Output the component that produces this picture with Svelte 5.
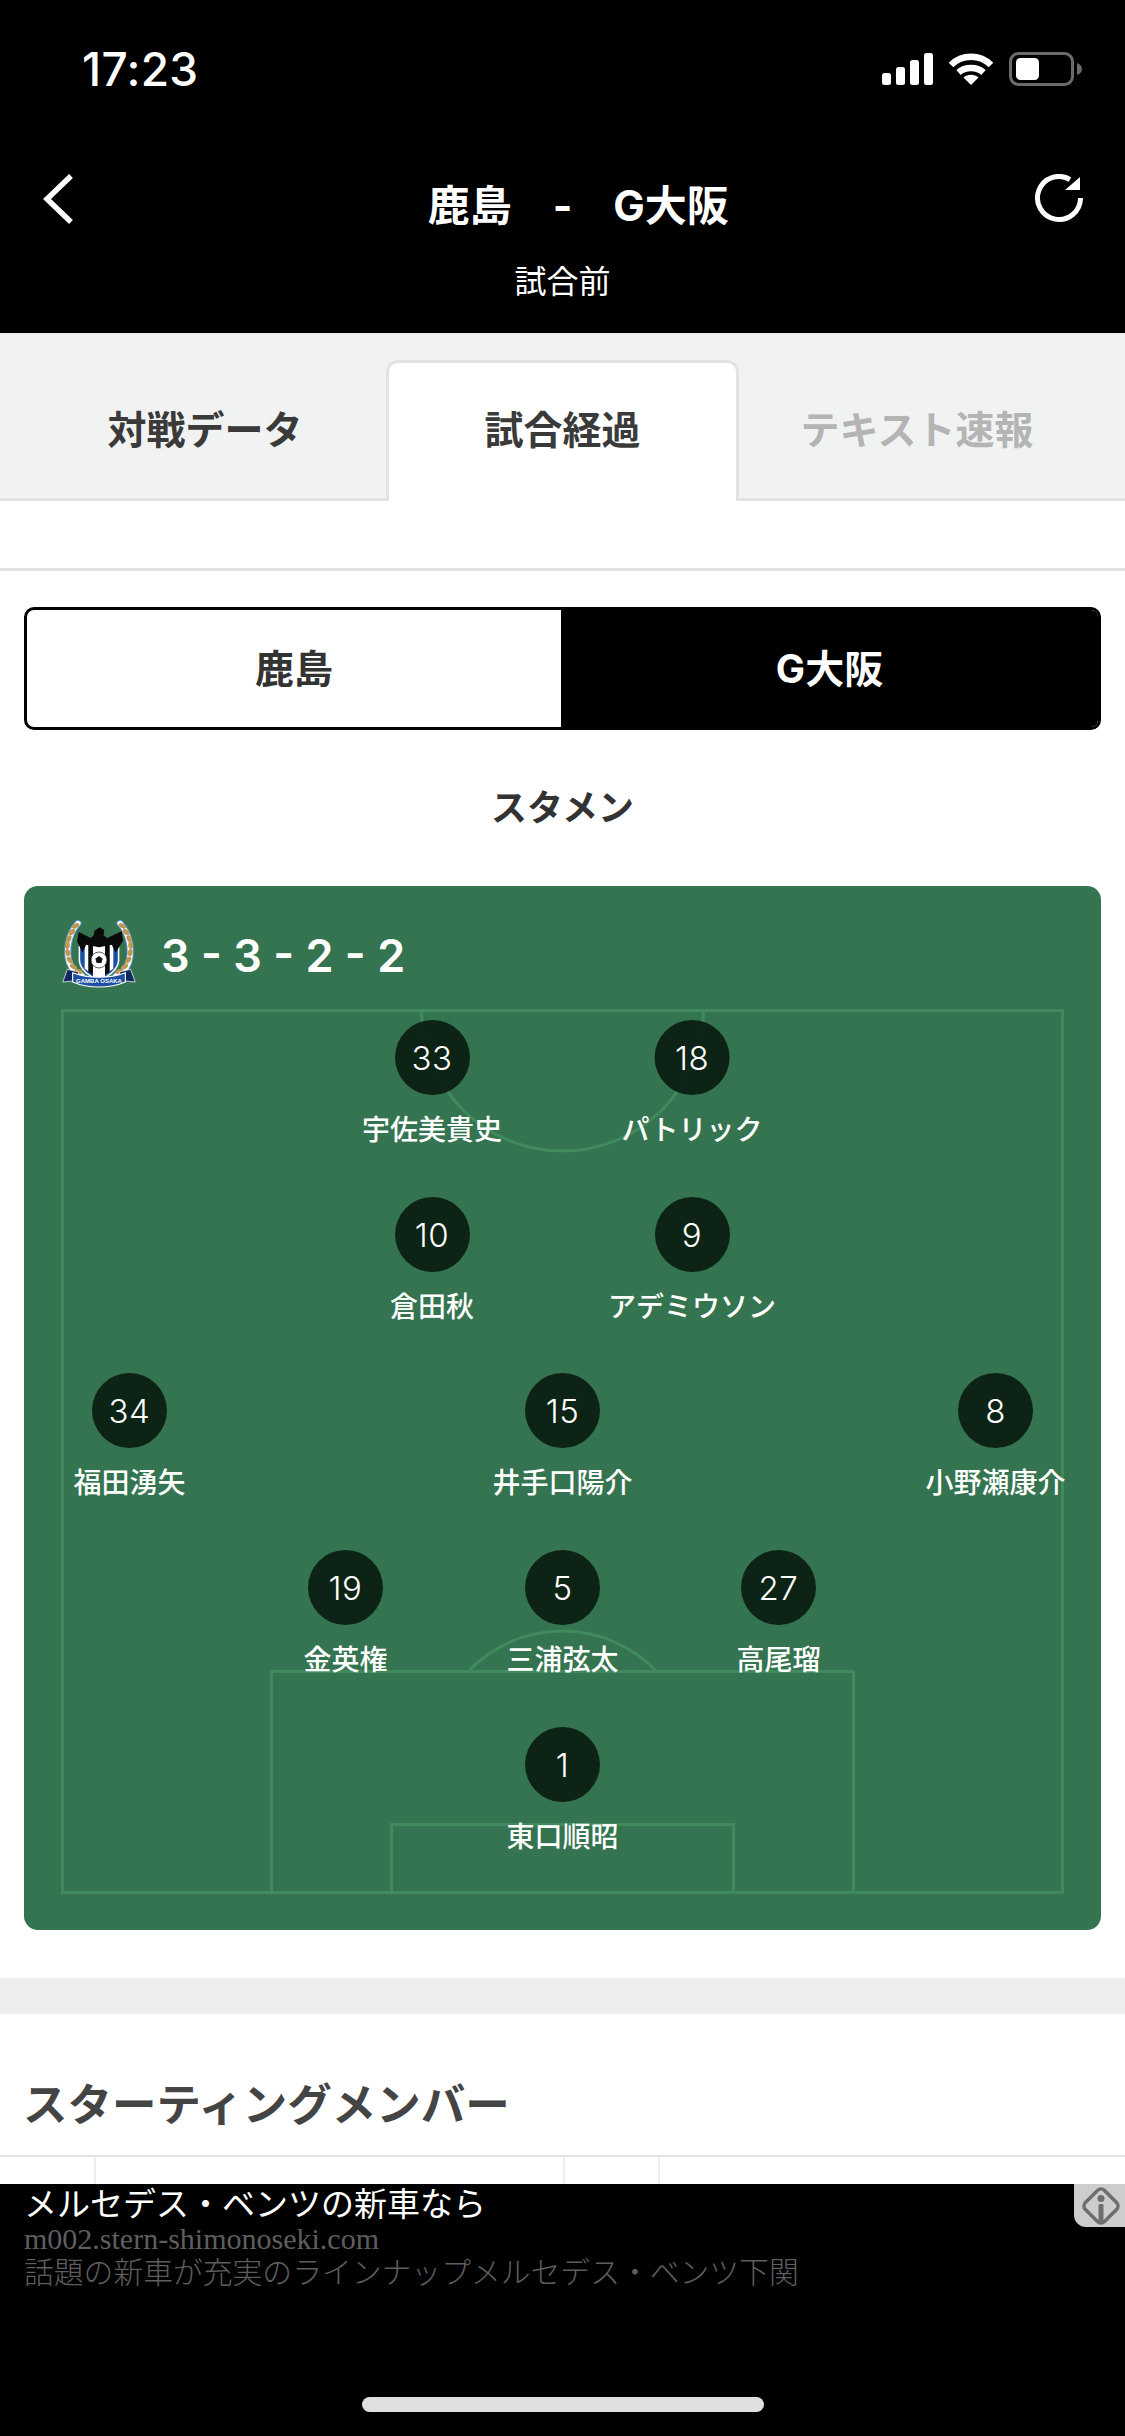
<script>
  const players = [
    { n: 33, name: '宇佐美貴史', x: 432, y: 1057.5 },
    { n: 18, name: 'パトリック', x: 692, y: 1057.5 },
    { n: 10, name: '倉田秋', x: 432, y: 1234.5 },
    { n: 9, name: 'アデミウソン', x: 692, y: 1234.5 },
    { n: 34, name: '福田湧矢', x: 129.5, y: 1410.5 },
    { n: 15, name: '井手口陽介', x: 562.5, y: 1410.5 },
    { n: 8, name: '小野瀬康介', x: 995.5, y: 1410.5 },
    { n: 19, name: '金英権', x: 345.5, y: 1587.5 },
    { n: 5, name: '三浦弦太', x: 562.5, y: 1587.5 },
    { n: 27, name: '高尾瑠', x: 778.5, y: 1587.5 },
    { n: 1, name: '東口順昭', x: 562.5, y: 1764.5 }
  ];
  const leaves = [
    [66, 48, -35], [56, 66, -50], [48, 86, -70], [44, 106, -85], [45, 128, 80], [50, 150, 60], [60, 170, 40], [74, 184, 25]
  ];
</script>

<div class="screen">
  <header class="top">
    <div class="status">
      <span class="time">17:23</span>
      <div class="status-icons">
        <svg class="signal" width="51" height="32" viewBox="0 0 51 32" fill="#fff">
          <rect x="0" y="20" width="9" height="12" rx="2.5" />
          <rect x="14" y="14" width="9" height="18" rx="2.5" />
          <rect x="28" y="7" width="9" height="25" rx="2.5" />
          <rect x="42" y="0" width="9" height="32" rx="2.5" />
        </svg>
        <svg class="wifi" width="46" height="34" viewBox="0 0 46 34" fill="none" stroke="#fff" stroke-width="6.5">
          <path d="M3 13C14 2 32 2 43 13" />
          <path d="M10.5 20.5C17 14.5 29 14.5 35.5 20.5" />
          <path d="M23 33l-7.5-7.5c4-3.6 11-3.6 15 0z" fill="#fff" stroke="none" />
        </svg>
        <svg class="battery" width="73" height="34" viewBox="0 0 73 34">
          <rect x="1.5" y="1.5" width="62" height="31" rx="8" fill="none" stroke="#6b6b6b" stroke-width="3" />
          <rect x="7" y="6" width="23" height="22" rx="4.5" fill="#fff" />
          <path d="M68 11c3 1 5 3 5 6s-2 5-5 6z" fill="#6b6b6b" />
        </svg>
      </div>
    </div>
    <div class="title-row">
      <div class="cell left">
        <svg class="back" width="32" height="52" viewBox="0 0 32 52" fill="none" stroke="#fff" stroke-width="5.5">
          <path d="M29 3L5 26l24 23" />
        </svg>
        <span class="team">鹿島</span>
      </div>
      <span class="dash">-</span>
      <div class="cell right">
        <span class="team">G大阪</span>
        <svg class="refresh" width="50" height="50" viewBox="0 0 50 50" fill="none">
          <path d="M47.5 24A21.5 21.5 0 1 1 37 5.5" stroke="#fff" stroke-width="5" />
          <path d="M32 16L47 16L47 3Z" fill="#fff" />
        </svg>
      </div>
    </div>
    <div class="subtitle">試合前</div>
  </header>

  <nav class="tabs">
    <div class="tab first">対戦データ</div>
    <div class="tab active">試合経過</div>
    <div class="tab last">テキスト速報</div>
  </nav>

  <div class="spacer"></div>

  <div class="toggle">
    <div class="side home-team">鹿島</div>
    <div class="side on">G大阪</div>
  </div>

  <h2 class="lineup">スタメン</h2>

  <section class="card">
    <div class="formation">
      <svg class="crest" width="90" height="85" viewBox="0 0 270 255">
        <g transform="translate(132 0) scale(1.13 1) translate(-128 0)">
          <g>
            <path d="M72 40C48 70 38 120 50 160C56 178 66 190 82 196" fill="none" stroke="#5f95d3" stroke-width="19" stroke-linecap="round" />
            <path d="M72 40C48 70 38 120 50 160C56 178 66 190 82 196" fill="none" stroke="#fff" stroke-width="14" stroke-linecap="round" />
            {#each leaves as l}
              <ellipse cx={l[0]} cy={l[1]} rx="11" ry="6.5" transform="rotate({l[2]} {l[0]} {l[1]})" fill="#bd9a54" />
            {/each}
          </g>
          <g transform="translate(256 0) scale(-1 1)">
            <path d="M72 40C48 70 38 120 50 160C56 178 66 190 82 196" fill="none" stroke="#5f95d3" stroke-width="19" stroke-linecap="round" />
            <path d="M72 40C48 70 38 120 50 160C56 178 66 190 82 196" fill="none" stroke="#fff" stroke-width="14" stroke-linecap="round" />
            {#each leaves as l}
              <ellipse cx={l[0]} cy={l[1]} rx="11" ry="6.5" transform="rotate({l[2]} {l[0]} {l[1]})" fill="#bd9a54" />
            {/each}
          </g>
          <path d="M74 108H182V150C182 182 150 202 128 214C106 202 74 182 74 150Z" fill="#fff" />
          <path d="M78 108H178V150C178 178 150 198 128 210C106 198 78 178 78 150Z" fill="#1d4fa3" />
          <path d="M90 105H100V184L90 176ZM156 105H166V176L156 184Z" fill="#fff" />
          <path d="M100 105H112V194L100 186ZM144 105H156V186L144 194Z" fill="#0a0a0a" />
          <path d="M112 105H144V204L128 210L112 200Z" fill="#fff" />
          <path d="M74 66L106 84L114 76L116 62L130 52L142 60L140 76L150 84L188 64L192 92L172 128L162 104L128 112L94 104L84 128L70 94Z" fill="#0a0a0a" />
          <path d="M44 178L74 186L68 212L32 216Z" fill="#10275f" stroke="#fff" stroke-width="2" />
          <path d="M212 178L182 186L188 212L224 216Z" fill="#10275f" stroke="#fff" stroke-width="2" />
          <path d="M58 188C100 206 156 206 198 188V216C156 236 100 236 58 216Z" fill="#1d4fa3" stroke="#fff" stroke-width="3" />
        </g>
        <circle cx="132" cy="150" r="24" fill="#fff" stroke="#111" stroke-width="2" />
        <path d="M132 138l11 8-4 13h-14l-4-13z" fill="#111" />
        <text x="132" y="218" text-anchor="middle" fill="#fff" class="crest-text">GAMBA OSAKA</text>
      </svg>
      <span class="shape">3 - 3 - 2 - 2</span>
    </div>
    <div class="pitch">
      <svg class="lines" width="1003" height="885" viewBox="0 0 1003 885" fill="none" stroke="#418a5e" stroke-width="3">
        <rect x="1.5" y="1.5" width="1000" height="882" />
        <path d="M360.5 1A141 141 0 0 0 642.5 1" />
        <rect x="210.5" y="662.5" width="582" height="221" />
        <rect x="330.5" y="815.5" width="342" height="68" />
        <path d="M408.7 661A130 130 0 0 1 594.3 661" />
      </svg>
      {#each players as p}
        <div class="player" style="left:{p.x - 61}px;top:{p.y - 1009 - 37.5}px">
          <div class="num">{p.n}</div>
          <div class="name">{p.name}</div>
        </div>
      {/each}
    </div>
  </section>

  <div class="band"></div>

  <h2 class="members">スターティングメンバー</h2>
  <div class="table-head">
    <div class="col c1"></div>
    <div class="col c2"></div>
    <div class="col c3"></div>
    <div class="col c4"></div>
  </div>

  <aside class="ad">
    <div class="ad-title">メルセデス・ベンツの新車なら</div>
    <div class="ad-url">m002.stern-shimonoseki.com</div>
    <div class="ad-desc">話題の新車が充実のラインナップメルセデス・ベンツ下関</div>
    <div class="ad-info">
      <svg width="40" height="40" viewBox="0 0 40 40">
        <rect x="6.5" y="6.5" width="27" height="27" rx="5" transform="rotate(45 20 20)" fill="none" stroke="#6e6e6e" stroke-width="3.5" />
        <circle cx="20" cy="12.5" r="3.5" fill="#6e6e6e" />
        <rect x="17.5" y="18" width="5" height="20" rx="1" fill="#6e6e6e" />
      </svg>
    </div>
    <div class="home"></div>
  </aside>
</div>

<style>
  :global(body) {
    margin: 0;
    background: #fff;
  }
  .screen {
    position: relative;
    width: 1125px;
    height: 2436px;
    overflow: hidden;
    background: #fff;
    font-family: Inter, "Noto Sans CJK JP", sans-serif;
    color: #333;
  }
  .top {
    height: 333px;
    background: #000;
    color: #fff;
    display: flex;
    flex-direction: column;
  }
  .status {
    height: 69px;
    padding: 34px 43px 0 82px;
    display: flex;
    justify-content: space-between;
    align-items: center;
  }
  .time {
    font-size: 46px;
    font-weight: 500;
    line-height: 1;
    letter-spacing: 0.3px;
  }
  .status-icons {
    display: flex;
    align-items: center;
    gap: 15px;
  }
  .title-row {
    height: 52px;
    margin-top: 70px;
    padding: 0 42px;
    display: grid;
    grid-template-columns: 1fr auto 1fr;
    align-items: center;
    font-size: 42px;
    font-weight: 700;
    line-height: 52px;
  }
  .cell {
    display: flex;
    align-items: center;
    justify-content: space-between;
  }
  .team,
  .dash {
    position: relative;
    top: 7px;
  }
  .dash {
    margin: 0 41px;
  }
  .subtitle {
    margin-top: 37px;
    text-align: center;
    font-size: 32px;
    line-height: 40px;
    font-weight: 400;
  }
  .tabs {
    height: 168px;
    box-sizing: border-box;
    background: #f1f3f3;
    border-bottom: 3px solid #e2e4e4;
    display: flex;
    align-items: flex-end;
  }
  .tab {
    height: 138px;
    box-sizing: border-box;
    display: flex;
    align-items: center;
    justify-content: center;
    font-size: 39px;
    font-weight: 700;
    color: #3a3a3a;
    padding-bottom: 5px;
  }
  .first {
    width: 386px;
    padding-left: 24px;
  }
  .active {
    width: 353px;
    height: 141px;
    margin-bottom: -3px;
    background: #fff;
    border: 3px solid #e2e4e4;
    border-bottom: none;
    border-radius: 12px 12px 0 0;
    padding-bottom: 11px;
  }
  .last {
    width: 386px;
    padding-right: 30px;
    color: #b4b4b4;
  }
  .spacer {
    height: 67px;
    border-bottom: 3px solid #e2e2e2;
  }
  .toggle {
    margin: 36px 24px 0;
    height: 123px;
    box-sizing: border-box;
    border: 3px solid #000;
    border-radius: 10px;
    overflow: hidden;
    display: flex;
  }
  .side {
    flex: 1;
    display: flex;
    align-items: center;
    justify-content: center;
    font-size: 39px;
    font-weight: 700;
    color: #333;
    padding-bottom: 6px;
  }
  .home-team {
    flex: none;
    width: 534px;
  }
  .on {
    background: #000;
    color: #fff;
  }
  .lineup {
    margin: 54px 0 0;
    height: 102px;
    text-align: center;
    font-size: 36px;
    line-height: 48px;
    font-weight: 700;
    color: #333;
  }
  .card {
    margin: 0 24px;
    height: 1044px;
    box-sizing: border-box;
    background: #357450;
    border-radius: 14px;
    padding: 0 37px;
  }
  .formation {
    height: 123px;
    display: flex;
    align-items: flex-start;
    margin-left: -6px;
    padding-top: 24px;
    box-sizing: border-box;
  }
  .crest {
    flex: none;
  }
  .crest-text {
    font-family: "Liberation Sans", sans-serif;
    font-size: 18px;
    font-weight: 700;
  }
  .shape {
    margin: 19px 0 0 16px;
    font-size: 45px;
    line-height: 54px;
    font-weight: 600;
    color: #fff;
    white-space: pre;
  }
  .pitch {
    position: relative;
    width: 1003px;
    height: 885px;
  }
  .lines {
    display: block;
  }
  .player {
    position: absolute;
    transform: translateX(-50%);
    display: flex;
    flex-direction: column;
    align-items: center;
    gap: 17px;
  }
  .num {
    width: 75px;
    height: 75px;
    border-radius: 50%;
    background: rgba(10, 29, 18, 0.93);
    color: #fff;
    font-size: 33px;
    font-weight: 300;
    letter-spacing: 0.5px;
    display: flex;
    align-items: center;
    justify-content: center;
  }
  .name {
    font-size: 28px;
    line-height: 36px;
    font-weight: 500;
    color: #fff;
    white-space: nowrap;
  }
  .band {
    height: 36px;
    margin-top: 48px;
    background: #eee;
  }
  .members {
    margin: 0;
    height: 143px;
    box-sizing: border-box;
    padding: 62px 0 0 23px;
    font-size: 44.5px;
    line-height: 58px;
    font-weight: 700;
    color: #444;
    border-bottom: 2px solid #e2e2e2;
  }
  .table-head {
    display: flex;
    height: 27px;
  }
  .col {
    border-right: 2px solid #eee;
  }
  .c1 {
    width: 94px;
  }
  .c2 {
    width: 467px;
  }
  .c3 {
    width: 93px;
  }
  .c4 {
    flex: 1;
    border-right: none;
  }
  .ad {
    position: absolute;
    left: 0;
    right: 0;
    bottom: 0;
    height: 252px;
    background: #000;
    font-family: "Liberation Serif", "Noto Sans CJK JP", serif;
    padding: 0 0 0 24px;
    box-sizing: border-box;
  }
  .ad-title {
    margin-top: 4px;
    font-size: 33px;
    line-height: 34px;
    color: #fff;
    font-weight: 400;
  }
  .ad-url {
    font-size: 30px;
    line-height: 34px;
    color: #5e5e5e;
  }
  .ad-desc {
    font-size: 29.8px;
    line-height: 34px;
    color: #5e5e5e;
    font-weight: 300;
  }
  .ad-info {
    position: absolute;
    top: 0;
    right: 0;
    width: 51px;
    height: 43px;
    background: #cdcdcd;
    border-radius: 0 0 0 12px;
    display: flex;
    align-items: center;
    justify-content: flex-end;
    overflow: hidden;
  }
  .ad-info svg {
    margin-right: 4px;
  }
  .home {
    position: absolute;
    left: 362px;
    top: 213px;
    width: 402px;
    height: 15px;
    border-radius: 8px;
    background: #e0e0e0;
  }
</style>
